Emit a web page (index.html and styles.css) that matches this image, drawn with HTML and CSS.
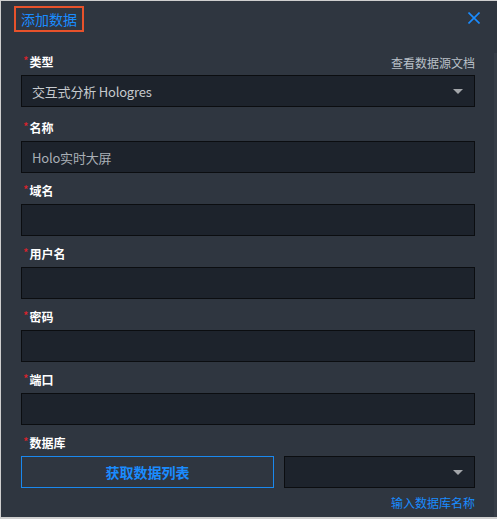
FILE: index.html
```html
<!DOCTYPE html>
<html lang="zh">
<head>
<meta charset="utf-8">
<title>添加数据</title>
<link rel="stylesheet" href="styles.css">
</head>
<body>
<div class="panel">
  <div class="header">
    <span class="title">添加数据</span>
    <svg class="close" width="12" height="12" viewBox="0 0 12 12"><path d="M0.5 0.5 L11.5 11.5 M11.5 0.5 L0.5 11.5" stroke="#1a8cff" stroke-width="1.6" fill="none"/></svg>
  </div>
  <div class="field first">
    <div class="label-row"><span class="label"><span class="req">*</span>类型</span><span class="doc-link">查看数据源文档</span></div>
    <div class="input select"><span class="value">交互式分析 Hologres</span><span class="caret"></span></div>
  </div>
  <div class="field">
    <div class="label-row"><span class="label"><span class="req">*</span>名称</span></div>
    <div class="input"><span class="value dim">Holo实时大屏</span></div>
  </div>
  <div class="field">
    <div class="label-row"><span class="label"><span class="req">*</span>域名</span></div>
    <div class="input"></div>
  </div>
  <div class="field">
    <div class="label-row"><span class="label"><span class="req">*</span>用户名</span></div>
    <div class="input"></div>
  </div>
  <div class="field">
    <div class="label-row"><span class="label"><span class="req">*</span>密码</span></div>
    <div class="input"></div>
  </div>
  <div class="field">
    <div class="label-row"><span class="label"><span class="req">*</span>端口</span></div>
    <div class="input"></div>
  </div>
  <div class="field">
    <div class="label-row"><span class="label"><span class="req">*</span>数据库</span></div>
    <div class="db-row">
      <button class="fetch-btn">获取数据列表</button>
      <div class="input select db-select"><span class="caret"></span></div>
    </div>
    <div class="helper"><span class="helper-link">输入数据库名称</span></div>
  </div>
  <div class="scroll-track"></div>
</div>
</body>
</html>
```
FILE: styles.css
```css
* { box-sizing: border-box; }
html, body { margin: 0; padding: 0; }
body {
  background: #cfcfcf;
  width: 497px;
  height: 519px;
  overflow: hidden;
  font-family: "Noto Sans CJK SC", "Noto Sans", sans-serif;
}
.panel {
  position: relative;
  margin: 1px 0 0 1px;
  width: 496px;
  height: 516px;
  background: #2f3640;
  padding: 0 22px 0 20px;
}
.header {
  position: relative;
  height: 51px;
  padding-top: 5px;
  margin-left: -7px;
}
.title {
  display: inline-block;
  border: 2px solid #e8522b;
  padding: 0 5px;
  height: 26px;
  line-height: 22px;
  font-size: 14px;
  color: #1a8cff;
}
.close {
  position: absolute;
  right: -5px;
  top: 11px;
}
.field { margin-top: 8px; }
.field.first { margin-top: 0; }
.field.first + .field { margin-top: 11px; }
.label-row {
  display: flex;
  justify-content: space-between;
  align-items: center;
  height: 20px;
  margin-bottom: 3px;
}
.label {
  color: #ffffff;
  font-size: 12px;
  font-weight: 600;
  padding-left: 2px;
  line-height: 20px;
}
.req {
  color: #e0222c;
  font-weight: 400;
  font-size: 12px;
  margin-right: 1px;
  position: relative;
  top: -1px;
}
.doc-link {
  color: #b9c0c8;
  font-size: 12px;
}
.input {
  height: 32px;
  background: #1d232c;
  border: 1px solid #0b0d10;
  display: flex;
  align-items: center;
  padding: 0 10px;
  position: relative;
}
.value {
  color: #c6cace;
  font-size: 13px;
  letter-spacing: -0.2px;
}
.value.dim { color: #a9afb6; }
.caret {
  position: absolute;
  right: 11px;
  top: 13px;
  width: 0;
  height: 0;
  border-left: 5px solid transparent;
  border-right: 5px solid transparent;
  border-top: 5px solid #a3a6aa;
}
.db-row {
  display: flex;
  gap: 10px;
}
.fetch-btn {
  width: 253px;
  height: 32px;
  background: transparent;
  border: 1px solid #1a88ee;
  color: #1a8cff;
  font-family: "Noto Sans CJK SC", sans-serif;
  font-size: 14px;
  font-weight: 600;
  padding: 0;
}
.db-select { flex: 1; }
.helper {
  display: flex;
  justify-content: flex-end;
  height: 20px;
  margin-top: 5px;
  line-height: 20px;
}
.helper-link {
  color: #1a8cff;
  font-size: 12px;
}
.scroll-track {
  position: absolute;
  right: 0;
  top: 52px;
  bottom: 0;
  width: 3px;
  background: #363d47;
}
```
